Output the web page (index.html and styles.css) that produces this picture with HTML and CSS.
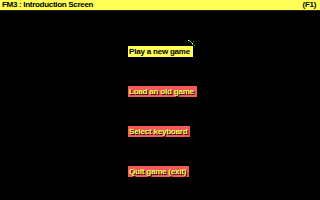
FILE: index.html
```html
<!DOCTYPE html>
<html>
<head lang="en">
    <meta charset="UTF-8">
    <title>FM3 : Introduction Screen</title>
    <link rel="stylesheet" href="styles.css">
</head>
<body>
<div class="screen">
    <div class="titlebar">
        <span class="title">FM3 : Introduction Screen</span>
        <span class="key">(F1)</span>
    </div>
    <ul class="menu">
        <li class="menu_item"><span class="btn active">Play a new game</span><svg class="cursor" width="7" height="6" viewBox="0 0 7 6"><path d="M1 0h1v1h-1zM2 1h1v1h-1zM3 2h1v1h-1zM5 1h1v1h-1zM4 4h1v1h-1zM6 5h1v1h-1z" fill="#3fd23f"/><path d="M0 0h1v1h-1zM4 3h1v1h-1z" fill="#e8ffe8"/></svg></li>
        <li class="menu_item"><span class="btn">Load an old game</span></li>
        <li class="menu_item"><span class="btn">Select keyboard</span></li>
        <li class="menu_item"><span class="btn">Quit game (exit)</span></li>
    </ul>
</div>
</body>
</html>
```

FILE: styles.css
```css
* {
    margin: 0;
    padding: 0;
}

body {
    background: #000;
    font-family: "Liberation Sans", sans-serif;
}

.screen {
    width: 320px;
    height: 200px;
    overflow: hidden;
}

.titlebar {
    display: flex;
    justify-content: space-between;
    height: 10px;
    padding: 0 4px 0 2px;
    background: #ffff55;
    border-bottom: 1px solid #222;
    font-size: 8px;
    line-height: 10px;
    font-weight: bold;
    letter-spacing: -0.3px;
    color: #000;
}

.menu {
    list-style: none;
    display: flex;
    flex-direction: column;
    gap: 29px;
    padding: 29px 0 0 128px;
}

.menu_item {
    position: relative;
    height: 11px;
}

.btn {
    display: inline-block;
    height: 11px;
    padding: 0 3px 0 1px;
    background: #f55a5a;
    color: #ffff55;
    font-size: 8px;
    line-height: 11px;
    font-weight: bold;
    letter-spacing: -0.2px;
    text-shadow: 1px 1px 0 #000;
}

.btn.active {
    background: #ffff55;
    color: #000;
    text-shadow: none;
}

.cursor {
    position: absolute;
    left: 60px;
    top: 0;
}
```
